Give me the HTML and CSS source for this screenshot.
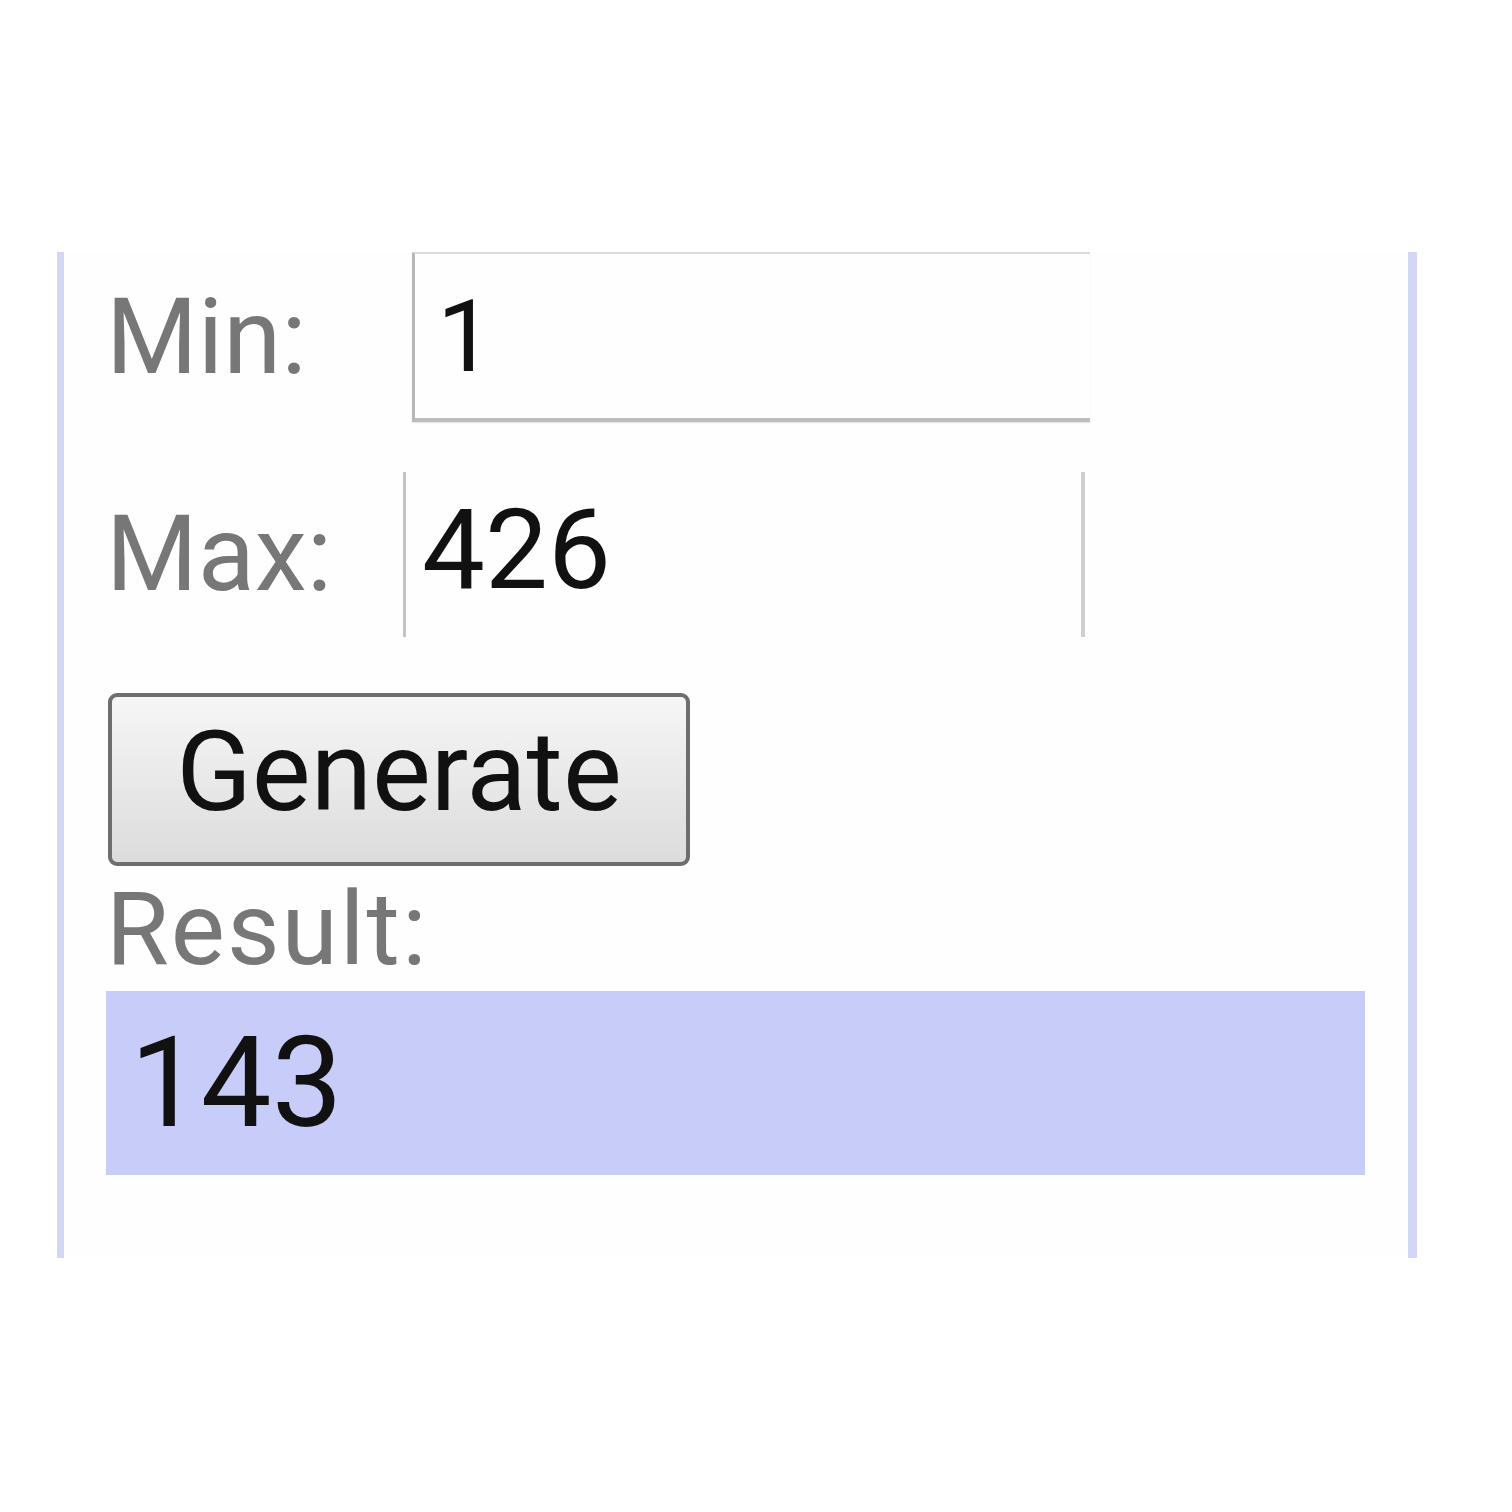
FILE: index.html
```html
<!DOCTYPE html>
<html>
<head>
<meta charset="utf-8">
<link rel="stylesheet" href="styles.css">
</head>
<body>
<div class="frame">
  <div class="row row-min">
    <span class="label label-min">Min:</span>
    <div class="field field-min">1</div>
  </div>
  <div class="row row-max">
    <span class="label label-max">Max:</span>
    <div class="field field-max">426</div>
  </div>
  <button class="btn">Generate</button>
  <div class="result-label">Result:</div>
  <div class="result">143</div>
</div>
</body>
</html>
```

FILE: styles.css
```css
html, body {
  margin: 0;
  padding: 0;
  background: #ffffff;
}
body {
  font-family: Roboto, "Noto Sans", sans-serif;
  padding-top: 252px;
}
.frame {
  margin-left: 57px;
  width: 1360px;
  height: 1006px;
  border-left: 7px solid #d3d7f5;
  border-right: 9px solid #d3d7f5;
  padding-left: 42px;
  padding-right: 43px;
  box-sizing: border-box;
  display: flex;
  flex-direction: column;
  align-items: flex-start;
  background: #fefefe;
}
.row {
  display: flex;
  align-items: center;
  width: 100%;
}
.row-min {
  height: 170px;
}
.row-max {
  height: 165px;
  margin-top: 50px;
}
.label {
  color: #777777;
  font-size: 105px;
  line-height: 1;
  margin-left: 0;
}
.label-min {
  width: 306px;
  flex: none;
}
.label-max {
  width: 297px;
  flex: none;
}
.field {
  box-sizing: border-box;
  height: 100%;
  color: #111111;
  line-height: 1;
  display: flex;
  align-items: center;
}
.field-min {
  width: 678px;
  font-size: 101px;
  border-top: 2px solid #dcdcdc;
  border-left: 3px solid #b8b8b8;
  border-bottom: 4px solid #bdbdbd;
  padding-left: 22px;
  box-shadow: 0 1px 1px #e6e6e6;
}
.field-max {
  width: 682px;
  font-size: 112px;
  border-left: 3px solid #c4c4c4;
  border-right: 4px solid #cfcfcf;
  padding-left: 16px;
  padding-bottom: 10px;
}
.btn {
  margin-top: 56px;
  margin-left: 2px;
  width: 582px;
  height: 173px;
  box-sizing: border-box;
  border: 4px solid #6e6e6e;
  border-radius: 9px;
  background: linear-gradient(#f6f6f6, #dcdcdc);
  font-family: Roboto, "Noto Sans", sans-serif;
  font-size: 111px;
  line-height: 1;
  color: #111111;
  padding: 0 0 14px 0;
}
.result-label {
  margin-top: 12px;
  margin-left: 0;
  color: #777777;
  font-size: 102px;
  letter-spacing: 2px;
  line-height: 1;
}
.result {
  margin-top: 11px;
  width: 100%;
  height: 184px;
  box-sizing: border-box;
  background: #c8ccf8;
  color: #111111;
  font-size: 126px;
  line-height: 1;
  padding-left: 24px;
  display: flex;
  align-items: center;
}
```
